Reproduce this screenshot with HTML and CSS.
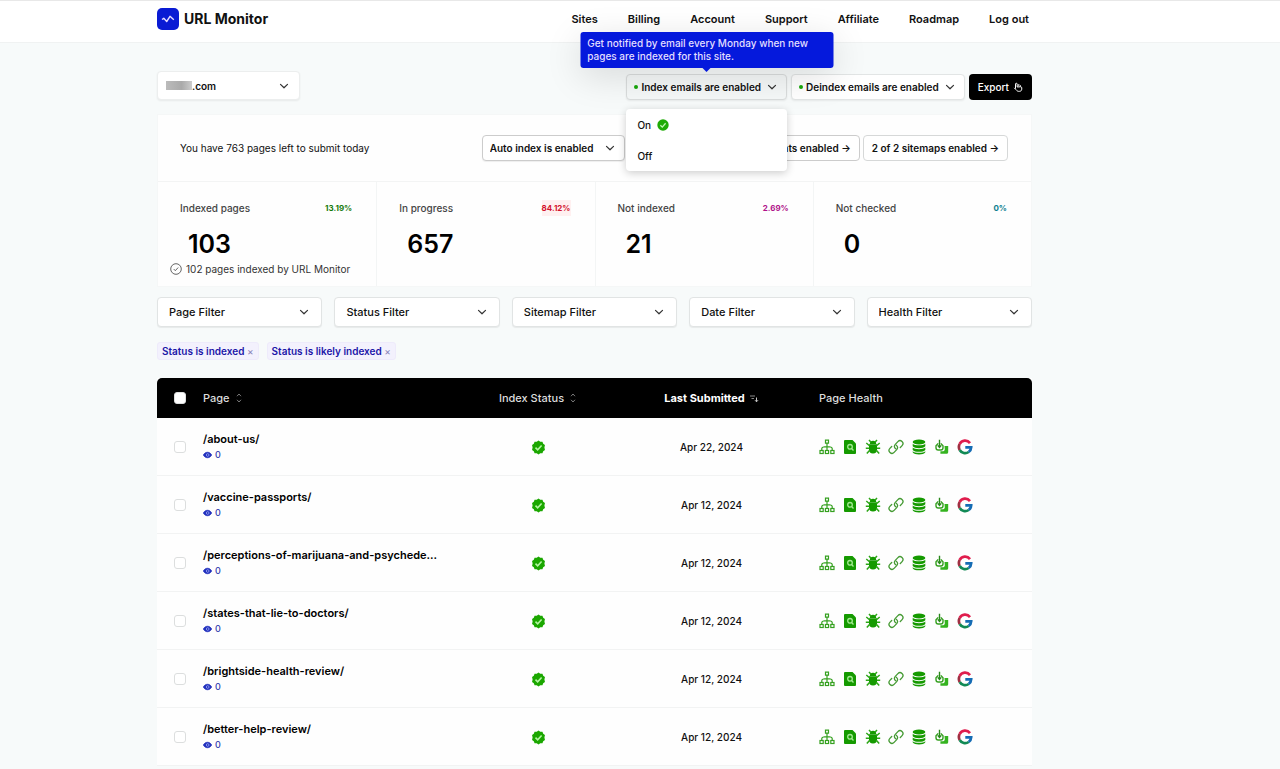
FILE: index.html
```html
<!DOCTYPE html>
<html lang="en">
<head>
<meta charset="utf-8">
<title>URL Monitor</title>
<link rel="stylesheet" href="styles.css">
</head>
<body>
<svg class="sprite" aria-hidden="true">
  <symbol id="chevron" viewBox="0 0 10 10"><path d="M1.500 3.400 5 6.800l3.500-3.400" fill="none" stroke="currentColor" stroke-width="1.200" stroke-linecap="round" stroke-linejoin="round"/></symbol>
  <symbol id="seal" viewBox="0 0 16 16"><path d="M8 .6l1.900 1.300 2.300-.1.800 2.200 1.900 1.300L14.300 8l.6 2.700-1.900 1.300-.8 2.200-2.300-.1L8 15.400l-1.900-1.300-2.300.1-.8-2.200-1.900-1.300L1.700 8l-.6-2.700L3 4l.8-2.200 2.300.1z" fill="#1ba700"/><path d="M4.800 8.200l2.300 2.300 4.200-4.600" fill="none" stroke="#b4f5a2" stroke-width="1.700"/></symbol>
  <symbol id="check" viewBox="0 0 12 12"><circle cx="6" cy="6" r="5.700" fill="#1fab05"/><path d="M3.400 6.200l1.900 1.900 3.300-3.800" fill="none" stroke="#c4f8b6" stroke-width="1.300"/></symbol>
  <symbol id="eye" viewBox="0 0 10 8"><path d="M.5 4C1.600 1.900 3.100 1 5 1s3.400.9 4.500 3C8.400 6.100 6.900 7 5 7S1.600 6.100.5 4z" fill="#2130bd" stroke="#2130bd"/><circle cx="5.200" cy="4" r="1.500" fill="none" stroke="#b9c3ff" stroke-width=".7"/></symbol>
  <symbol id="sort" viewBox="0 0 8 12"><path d="M2 4.200 4 2l2 2.200M2 7.800 4 10l2-2.200" fill="none" stroke="#999" stroke-width=".8"/></symbol>
  <symbol id="sorted" viewBox="0 0 10 12"><path d="M1 4h5M2.500 6.500H5" stroke="#888" fill="none"/><path d="M7.500 5.500v4M6 8.200l1.500 1.600L9 8.200" fill="none" stroke="#ddd" stroke-width=".9"/></symbol>
  <symbol id="sitemap" viewBox="0 0 16 16"><g fill="none" stroke="#35a01f" stroke-width="1.200"><path d="M6.500 1.200h3v3h-3zM8 4.200v7.300M2.800 11.200V9.500Q2.800 7.600 8 7.600t5.200 1.900v1.700"/><rect x="1" y="11.500" width="3.200" height="3"/><rect x="6.400" y="11.500" width="3.200" height="3"/><rect x="11.800" y="11.500" width="3.200" height="3"/></g></symbol>
  <symbol id="doc" viewBox="0 0 16 16"><path d="M3 1h7.500L14 4.500V14a1 1 0 0 1-1 1H3a1 1 0 0 1-1-1V2a1 1 0 0 1 1-1z" fill="#159a00"/><circle cx="8" cy="7.800" r="2.300" fill="none" stroke="#a4ea92" stroke-width="1.300"/><path d="M9.600 9.500l1.900 2" stroke="#a4ea92" stroke-width="1.300"/></symbol>
  <symbol id="bug" viewBox="0 0 16 16"><path d="M4.800 5a3.200 3.200 0 0 1 6.400 0z" fill="#159a00"/><path d="M4 5.200h8v5.300a4 4 0 0 1-8 0z" fill="#159a00"/><path d="M5.800 3 4 1M10.200 3 12 1M4.500 6.800 1.300 4M11.500 6.800 14.700 4M4 9.200H.8M12 9.200h3.200M4.500 11.500l-2.700 3M11.500 11.500l2.700 3" stroke="#2da617" stroke-width="1.500" fill="none"/></symbol>
  <symbol id="link" viewBox="0 0 16 16"><g fill="none" stroke="#459a33" stroke-width="1.300" stroke-linecap="round"><path d="M7.800 9.800C6 8.500 6 6.800 7.300 5.400l2.600-2.800a2.900 2.900 0 0 1 4.200 4L12.300 8.500"/><path d="M8.200 6.200C10 7.500 10 9.200 8.700 10.600l-2.600 2.800a2.900 2.900 0 0 1-4.200-4L3.700 7.500"/></g></symbol>
  <symbol id="database" viewBox="0 0 16 16"><g fill="#159a00"><ellipse cx="8" cy="3" rx="6.300" ry="2.400"/><path d="M1.700 4.700c2 2.100 10.600 2.100 12.600 0v2.500c-1.500 2.600-11.100 2.600-12.600 0z"/><path d="M1.700 8.600c2 2.100 10.600 2.100 12.600 0v2.300c-1.500 2.600-11.100 2.600-12.600 0z"/><path d="M1.700 12.200c2 2.100 10.600 2.100 12.600 0v1c-1.500 2.900-11.100 2.900-12.600 0z"/></g></symbol>
  <symbol id="cache" viewBox="0 0 16 16"><path d="M4.200 4.400 2 6.800v2c0 1.200 1 2.200 2.200 2.200h2.600C8 11 9 10 9 8.800v-2L6.800 4.400" fill="none" stroke="#35a01f" stroke-width="1.400"/><path d="M5.500.8v7M3.700 6.400l1.800 2 1.800-2" fill="none" stroke="#28881a" stroke-width="1.400"/><path d="M10.500 7h3.700v6c0 1-.6 1.800-1.600 1.800H6.400v-2.600h2.800c1 0 1.600-.8 1.600-1.600z" fill="#35b31f"/></symbol>
  <symbol id="google" viewBox="0 0 16 16"><g fill="none" stroke-width="2.700"><path d="M13 4.100A6.200 6.200 0 0 0 2.600 5" stroke="#e01d4d"/><path d="M2.600 5a6.500 6.500 0 0 0 .1 6" stroke="#a02f42"/><path d="M2.700 11a6.200 6.200 0 0 0 9 2" stroke="#118a55"/><path d="M11.700 13a6 6 0 0 0 2.500-4.700H8.300" stroke="#156cb4"/></g></symbol>
  <symbol id="hand" viewBox="0 0 12 12"><path d="M3 8V2.500a1 1 0 0 1 2 0V6l4-.3c1 0 1.500.6 1.500 1.300v1.500c0 1.500-1 2.700-2.700 2.700H6.500C5.200 11.200 4.300 10 1.500 7M7 5V2.500M9 5.500V4" fill="none" stroke="#fff" stroke-width="1.200"/></symbol>
</svg>

<header class="topbar">
  <div class="shell topbar-inner">
    <a class="brand" href="#">
      <svg class="brand-logo" viewBox="0 0 22 22" aria-hidden="true"><rect width="22" height="22" rx="5" fill="#0a1bd4"/><path d="M5 11.500 6.800 10.300 9.700 13.500 13 8.300l3.800 3.500" fill="none" stroke="#e6dcff" stroke-width="1.400" stroke-linejoin="round"/></svg>
      URL Monitor
    </a>
    <nav class="nav">
      <a href="#">Sites</a><a href="#">Billing</a><a href="#">Account</a><a href="#">Support</a><a href="#">Affiliate</a><a href="#">Roadmap</a><a href="#">Log out</a>
    </nav>
  </div>
</header>

<main class="shell">
  <div class="toolbar">
    <button class="site-picker" type="button" aria-haspopup="listbox"><span class="redacted"></span><span>.com</span><svg class="chev" aria-hidden="true"><use href="#chevron"/></svg></button>
    <div class="toolbar-actions">
      <div class="email-control">
        <button class="btn email-btn is-open" type="button" aria-haspopup="menu" aria-expanded="true"><span class="dot"></span>Index emails are enabled<svg class="chev" aria-hidden="true"><use href="#chevron"/></svg></button>
        <div class="tooltip" role="tooltip">Get notified by email every Monday when new pages are indexed for this site.</div>
        <div class="menu" role="menu">
          <button type="button" role="menuitem">On <svg class="menu-check" aria-hidden="true"><use href="#check"/></svg></button>
          <button type="button" role="menuitem">Off</button>
        </div>
      </div>
      <button class="btn email-btn" type="button" aria-haspopup="menu"><span class="dot"></span>Deindex emails are enabled<svg class="chev" aria-hidden="true"><use href="#chevron"/></svg></button>
      <button class="export" type="button">Export <svg aria-hidden="true"><use href="#hand"/></svg></button>
    </div>
  </div>

  <section class="panel">
    <div class="panel-top">
      <p>You have 763 pages left to submit today</p>
      <div class="panel-actions">
        <div class="select auto-index"><select aria-label="Auto index"><option>Auto index is enabled</option></select><svg class="chev" aria-hidden="true"><use href="#chevron"/></svg></div>
        <button class="btn accounts" type="button">1 of 1 accounts enabled →</button>
        <button class="btn" type="button">2 of 2 sitemaps enabled →</button>
      </div>
    </div>
    <div class="stats">
      <div class="stat">
        <div class="stat-head"><span>Indexed pages</span><b class="green">13.19%</b></div>
        <strong>103</strong>
        <div class="stat-note"><svg viewBox="0 0 12 12" aria-hidden="true"><circle cx="6" cy="6" r="5.300" fill="none" stroke="#555" stroke-width=".9"/><path d="M3.800 6.100l1.500 1.600 2.900-3.200" fill="none" stroke="#555" stroke-width=".9"/></svg>102 pages indexed by URL Monitor</div>
      </div>
      <div class="stat"><div class="stat-head"><span>In progress</span><b class="red">84.12%</b></div><strong>657</strong></div>
      <div class="stat"><div class="stat-head"><span>Not indexed</span><b class="pink">2.69%</b></div><strong>21</strong></div>
      <div class="stat"><div class="stat-head"><span>Not checked</span><b class="teal">0%</b></div><strong>0</strong></div>
    </div>
  </section>

  <div class="filters">
    <div class="select"><select aria-label="Page Filter"><option>Page Filter</option></select><svg class="chev" aria-hidden="true"><use href="#chevron"/></svg></div>
    <div class="select"><select aria-label="Status Filter"><option>Status Filter</option></select><svg class="chev" aria-hidden="true"><use href="#chevron"/></svg></div>
    <div class="select"><select aria-label="Sitemap Filter"><option>Sitemap Filter</option></select><svg class="chev" aria-hidden="true"><use href="#chevron"/></svg></div>
    <div class="select"><select aria-label="Date Filter"><option>Date Filter</option></select><svg class="chev" aria-hidden="true"><use href="#chevron"/></svg></div>
    <div class="select"><select aria-label="Health Filter"><option>Health Filter</option></select><svg class="chev" aria-hidden="true"><use href="#chevron"/></svg></div>
  </div>

  <div class="tags">
    <button class="tag" type="button">Status is indexed <span>×</span></button>
    <button class="tag" type="button">Status is likely indexed <span>×</span></button>
  </div>

  <table class="pages">
    <colgroup><col class="c-check"><col><col class="c-status"><col class="c-date"><col class="c-health"></colgroup>
    <thead>
      <tr>
        <th class="check"><input type="checkbox" aria-label="Select all pages"></th>
        <th><span class="th">Page <svg aria-hidden="true"><use href="#sort"/></svg></span></th>
        <th class="mid"><span class="th">Index Status <svg aria-hidden="true"><use href="#sort"/></svg></span></th>
        <th class="mid"><span class="th current">Last Submitted <svg aria-hidden="true"><use href="#sorted"/></svg></span></th>
        <th class="health-cell"><span class="th">Page Health</span></th>
      </tr>
    </thead>
    <tbody>
      <tr>
        <td class="check"><input type="checkbox" aria-label="Select /about-us/"></td>
        <td><a class="path" href="#">/about-us/</a><span class="views"><svg aria-hidden="true"><use href="#eye"/></svg>0</span></td>
        <td class="mid"><svg class="seal" role="img" aria-label="Indexed"><use href="#seal"/></svg></td>
        <td class="mid">Apr 22, 2024</td>
        <td class="health-cell"><div class="health"><svg><use href="#sitemap"/></svg><svg><use href="#doc"/></svg><svg><use href="#bug"/></svg><svg><use href="#link"/></svg><svg><use href="#database"/></svg><svg><use href="#cache"/></svg><svg><use href="#google"/></svg></div></td>
      </tr>
      <tr>
        <td class="check"><input type="checkbox" aria-label="Select /vaccine-passports/"></td>
        <td><a class="path" href="#">/vaccine-passports/</a><span class="views"><svg aria-hidden="true"><use href="#eye"/></svg>0</span></td>
        <td class="mid"><svg class="seal" role="img" aria-label="Indexed"><use href="#seal"/></svg></td>
        <td class="mid">Apr 12, 2024</td>
        <td class="health-cell"><div class="health"><svg><use href="#sitemap"/></svg><svg><use href="#doc"/></svg><svg><use href="#bug"/></svg><svg><use href="#link"/></svg><svg><use href="#database"/></svg><svg><use href="#cache"/></svg><svg><use href="#google"/></svg></div></td>
      </tr>
      <tr>
        <td class="check"><input type="checkbox" aria-label="Select /perceptions-of-marijuana-and-psychede..."></td>
        <td><a class="path" href="#">/perceptions-of-marijuana-and-psychede...</a><span class="views"><svg aria-hidden="true"><use href="#eye"/></svg>0</span></td>
        <td class="mid"><svg class="seal" role="img" aria-label="Indexed"><use href="#seal"/></svg></td>
        <td class="mid">Apr 12, 2024</td>
        <td class="health-cell"><div class="health"><svg><use href="#sitemap"/></svg><svg><use href="#doc"/></svg><svg><use href="#bug"/></svg><svg><use href="#link"/></svg><svg><use href="#database"/></svg><svg><use href="#cache"/></svg><svg><use href="#google"/></svg></div></td>
      </tr>
      <tr>
        <td class="check"><input type="checkbox" aria-label="Select /states-that-lie-to-doctors/"></td>
        <td><a class="path" href="#">/states-that-lie-to-doctors/</a><span class="views"><svg aria-hidden="true"><use href="#eye"/></svg>0</span></td>
        <td class="mid"><svg class="seal" role="img" aria-label="Indexed"><use href="#seal"/></svg></td>
        <td class="mid">Apr 12, 2024</td>
        <td class="health-cell"><div class="health"><svg><use href="#sitemap"/></svg><svg><use href="#doc"/></svg><svg><use href="#bug"/></svg><svg><use href="#link"/></svg><svg><use href="#database"/></svg><svg><use href="#cache"/></svg><svg><use href="#google"/></svg></div></td>
      </tr>
      <tr>
        <td class="check"><input type="checkbox" aria-label="Select /brightside-health-review/"></td>
        <td><a class="path" href="#">/brightside-health-review/</a><span class="views"><svg aria-hidden="true"><use href="#eye"/></svg>0</span></td>
        <td class="mid"><svg class="seal" role="img" aria-label="Indexed"><use href="#seal"/></svg></td>
        <td class="mid">Apr 12, 2024</td>
        <td class="health-cell"><div class="health"><svg><use href="#sitemap"/></svg><svg><use href="#doc"/></svg><svg><use href="#bug"/></svg><svg><use href="#link"/></svg><svg><use href="#database"/></svg><svg><use href="#cache"/></svg><svg><use href="#google"/></svg></div></td>
      </tr>
      <tr>
        <td class="check"><input type="checkbox" aria-label="Select /better-help-review/"></td>
        <td><a class="path" href="#">/better-help-review/</a><span class="views"><svg aria-hidden="true"><use href="#eye"/></svg>0</span></td>
        <td class="mid"><svg class="seal" role="img" aria-label="Indexed"><use href="#seal"/></svg></td>
        <td class="mid">Apr 12, 2024</td>
        <td class="health-cell"><div class="health"><svg><use href="#sitemap"/></svg><svg><use href="#doc"/></svg><svg><use href="#bug"/></svg><svg><use href="#link"/></svg><svg><use href="#database"/></svg><svg><use href="#cache"/></svg><svg><use href="#google"/></svg></div></td>
      </tr>
    </tbody>
  </table>
</main>
</body>
</html>
```

FILE: styles.css
```css
* { box-sizing: border-box; }
body {
  margin: 0;
  background: #f7fafa;
  color: #111;
  font: 10px/16px Inter, "Liberation Sans", sans-serif;
}
button, select, input { font: inherit; color: inherit; margin: 0; }
button { cursor: pointer; white-space: nowrap; }
a { color: inherit; text-decoration: none; }
p { margin: 0; }
.sprite { position: absolute; width: 0; height: 0; }
.shell { padding: 0 248px 0 157px; }

.topbar { background: #fff; border-top: 1px solid #e8e8e8; border-bottom: 1px solid #f0f2f2; }
.topbar-inner { display: flex; align-items: center; justify-content: space-between; height: 41px; padding-bottom: 6px; }
.brand { display: flex; align-items: center; gap: 5px; font-size: 14px; font-weight: 700; }
.brand-logo { width: 22px; height: 22px; }
.nav { display: flex; gap: 30px; padding-right: 3px; font-size: 11px; font-weight: 600; }

.chev { width: 10px; height: 10px; flex: none; color: #333; }
.toolbar { display: flex; align-items: flex-start; justify-content: space-between; padding: 28px 0 14px; }
.site-picker {
  display: flex; align-items: center; width: 143px; height: 29px; padding: 0 10px 0 8px;
  background: #fff; border: 1px solid #eceeee; border-radius: 4px; font-weight: 600;
  box-shadow: 0 1px 2px #0001;
}
.site-picker .chev { margin-left: auto; }
.redacted { width: 26px; height: 9px; background: linear-gradient(90deg, #bbb, #aaa 60%, #ccc); }
.toolbar-actions { display: flex; gap: 4px; padding-top: 3px; }
.btn {
  display: flex; align-items: center; justify-content: center; height: 26px; padding: 0 8px;
  background: #fff; border: 1px solid #d6d8d8; border-radius: 4px; font-weight: 600;
}
.email-btn { padding: 0 9px 0 7px; border-color: #e2e5e5; box-shadow: 0 1px 2px #0001; }
.email-btn .chev { margin-left: 6px; }
.email-btn.is-open { background: #f5f8f8; border-color: #dadddd; }
.dot { width: 4px; height: 4px; margin-right: 3px; border-radius: 50%; background: #17a80a; }
.export {
  display: flex; align-items: center; gap: 4px; height: 26px; padding: 0 9px;
  background: #000; color: #fff; border: 0; border-radius: 4px; font-weight: 500;
}
.export svg { width: 10px; height: 10px; }
.email-control { position: relative; }
.tooltip {
  position: absolute; left: 50%; bottom: calc(100% + 6px); width: 253px; transform: translateX(-50%);
  padding: 5px 7px; background: #0519dc; color: #e2dfff; border-radius: 3px;
  font-size: 10px; line-height: 13px; font-weight: 500; box-shadow: 0 8px 36px #0002; z-index: 3;
}
.tooltip::after {
  content: ""; position: absolute; left: 50%; top: 100%; margin-left: -4px;
  border: 4px solid transparent; border-top-color: #0519dc; border-bottom: 0;
}
.menu {
  position: absolute; left: 0; right: 0; top: calc(100% + 9px); background: #fff; border-radius: 4px;
  box-shadow: 0 2px 8px #0003; z-index: 2;
}
.menu button {
  display: flex; align-items: center; gap: 6px; width: 100%; height: 31px; padding: 0 11px;
  background: none; border: 0; font-weight: 500;
}
.menu-check { width: 12px; height: 12px; }

.panel { background: #fefefe; border: 1px solid #f5f7f7; }
.panel-top { display: flex; align-items: center; justify-content: space-between; height: 67px; padding: 0 23px 0 22px; border-bottom: 1px solid #f3f4f4; }
.panel-actions { display: flex; gap: 3px; }
.accounts { min-width: 232px; justify-content: flex-end; border-color: #ccc; }
.select { position: relative; }
.select select {
  width: 100%; height: 30px; padding: 0 28px 0 11px; appearance: none;
  background: #fff; border: 1px solid #e1e4e4; border-radius: 4px; font-size: 11px; font-weight: 500;
  box-shadow: 0 1px 1px #0001;
}
.select .chev { position: absolute; right: 13px; top: 50%; margin-top: -5px; pointer-events: none; }
.auto-index { width: 143px; }
.select.auto-index select { height: 26px; padding: 0 20px 0 7px; border-color: #ccc; font-size: 10px; font-weight: 600; }
.select.auto-index .chev { right: 10px; }

.stats { display: grid; grid-template-columns: repeat(4, 1fr); }
.stat { height: 104px; padding: 18px 12px 0; border-left: 1px solid #f3f5f5; }
.stat:first-child { border-left: 0; }
.stat-head { display: flex; justify-content: space-between; padding: 0 12px 0 10px; color: #444; font-weight: 500; }
.stat-head b { font-size: 8px; }
.stat strong { display: block; padding-left: 18px; margin-top: 12px; font-size: 25px; line-height: 33px; font-weight: 600; color: #000; }
.stat-note { display: flex; align-items: center; gap: 4px; color: #333; }
.stat-note svg { width: 12px; height: 12px; }
.green { color: #147a0a; }
.red { color: #d3122c; background: #fff0f0; }
.pink { color: #b0128a; }
.teal { color: #0b8090; }

.filters { display: grid; grid-template-columns: repeat(5, 1fr); gap: 12px; padding: 10px 0 15px; }
.tags { display: flex; gap: 8px; padding-bottom: 18px; }
.tag { height: 18px; padding: 0 4px; background: #f3f1fd; border: 1px solid #eeebfb; border-radius: 3px; color: #1c16a8; font-weight: 600; }
.tag span { color: #8880b8; font-weight: 400; }

.pages { width: 100%; table-layout: fixed; border-collapse: separate; border-spacing: 0; background: #fefefe; }
.c-check { width: 46px; }
.c-status { width: 175px; }
.c-date { width: 171px; }
.c-health { width: 235px; }
.pages th { height: 40px; padding: 0; background: #000; color: #ddd; font-size: 11px; font-weight: 500; text-align: left; }
.pages th:first-child { border-top-left-radius: 5px; }
.pages th:last-child { border-top-right-radius: 5px; }
.th { display: inline-flex; align-items: center; gap: 4px; }
.th.current { font-weight: 700; color: #fff; }
.th svg { width: 10px; height: 12px; }
.pages td { height: 58px; padding: 1px 0 0; border-bottom: 1px solid #f2f3f3; font-weight: 500; }
.pages .mid { text-align: center; }
.pages .check { padding-left: 17px; line-height: 0; }
.pages .check input { appearance: none; width: 12px; height: 12px; background: #fff; border: 1px solid #dcdede; border-radius: 3px; }
.pages .health-cell { padding-left: 22px; }
.path { display: block; font-size: 11px; font-weight: 600; color: #000; line-height: 16px; }
.views { display: flex; align-items: center; gap: 3px; padding-bottom: 1px; color: #3540b0; font-size: 9px; line-height: 16px; }
.views svg { width: 9px; height: 8px; }
.seal { display: block; width: 15px; height: 15px; margin: 0 auto; }
.health { display: flex; gap: 7px; }
.health svg { width: 16px; height: 16px; }
```
